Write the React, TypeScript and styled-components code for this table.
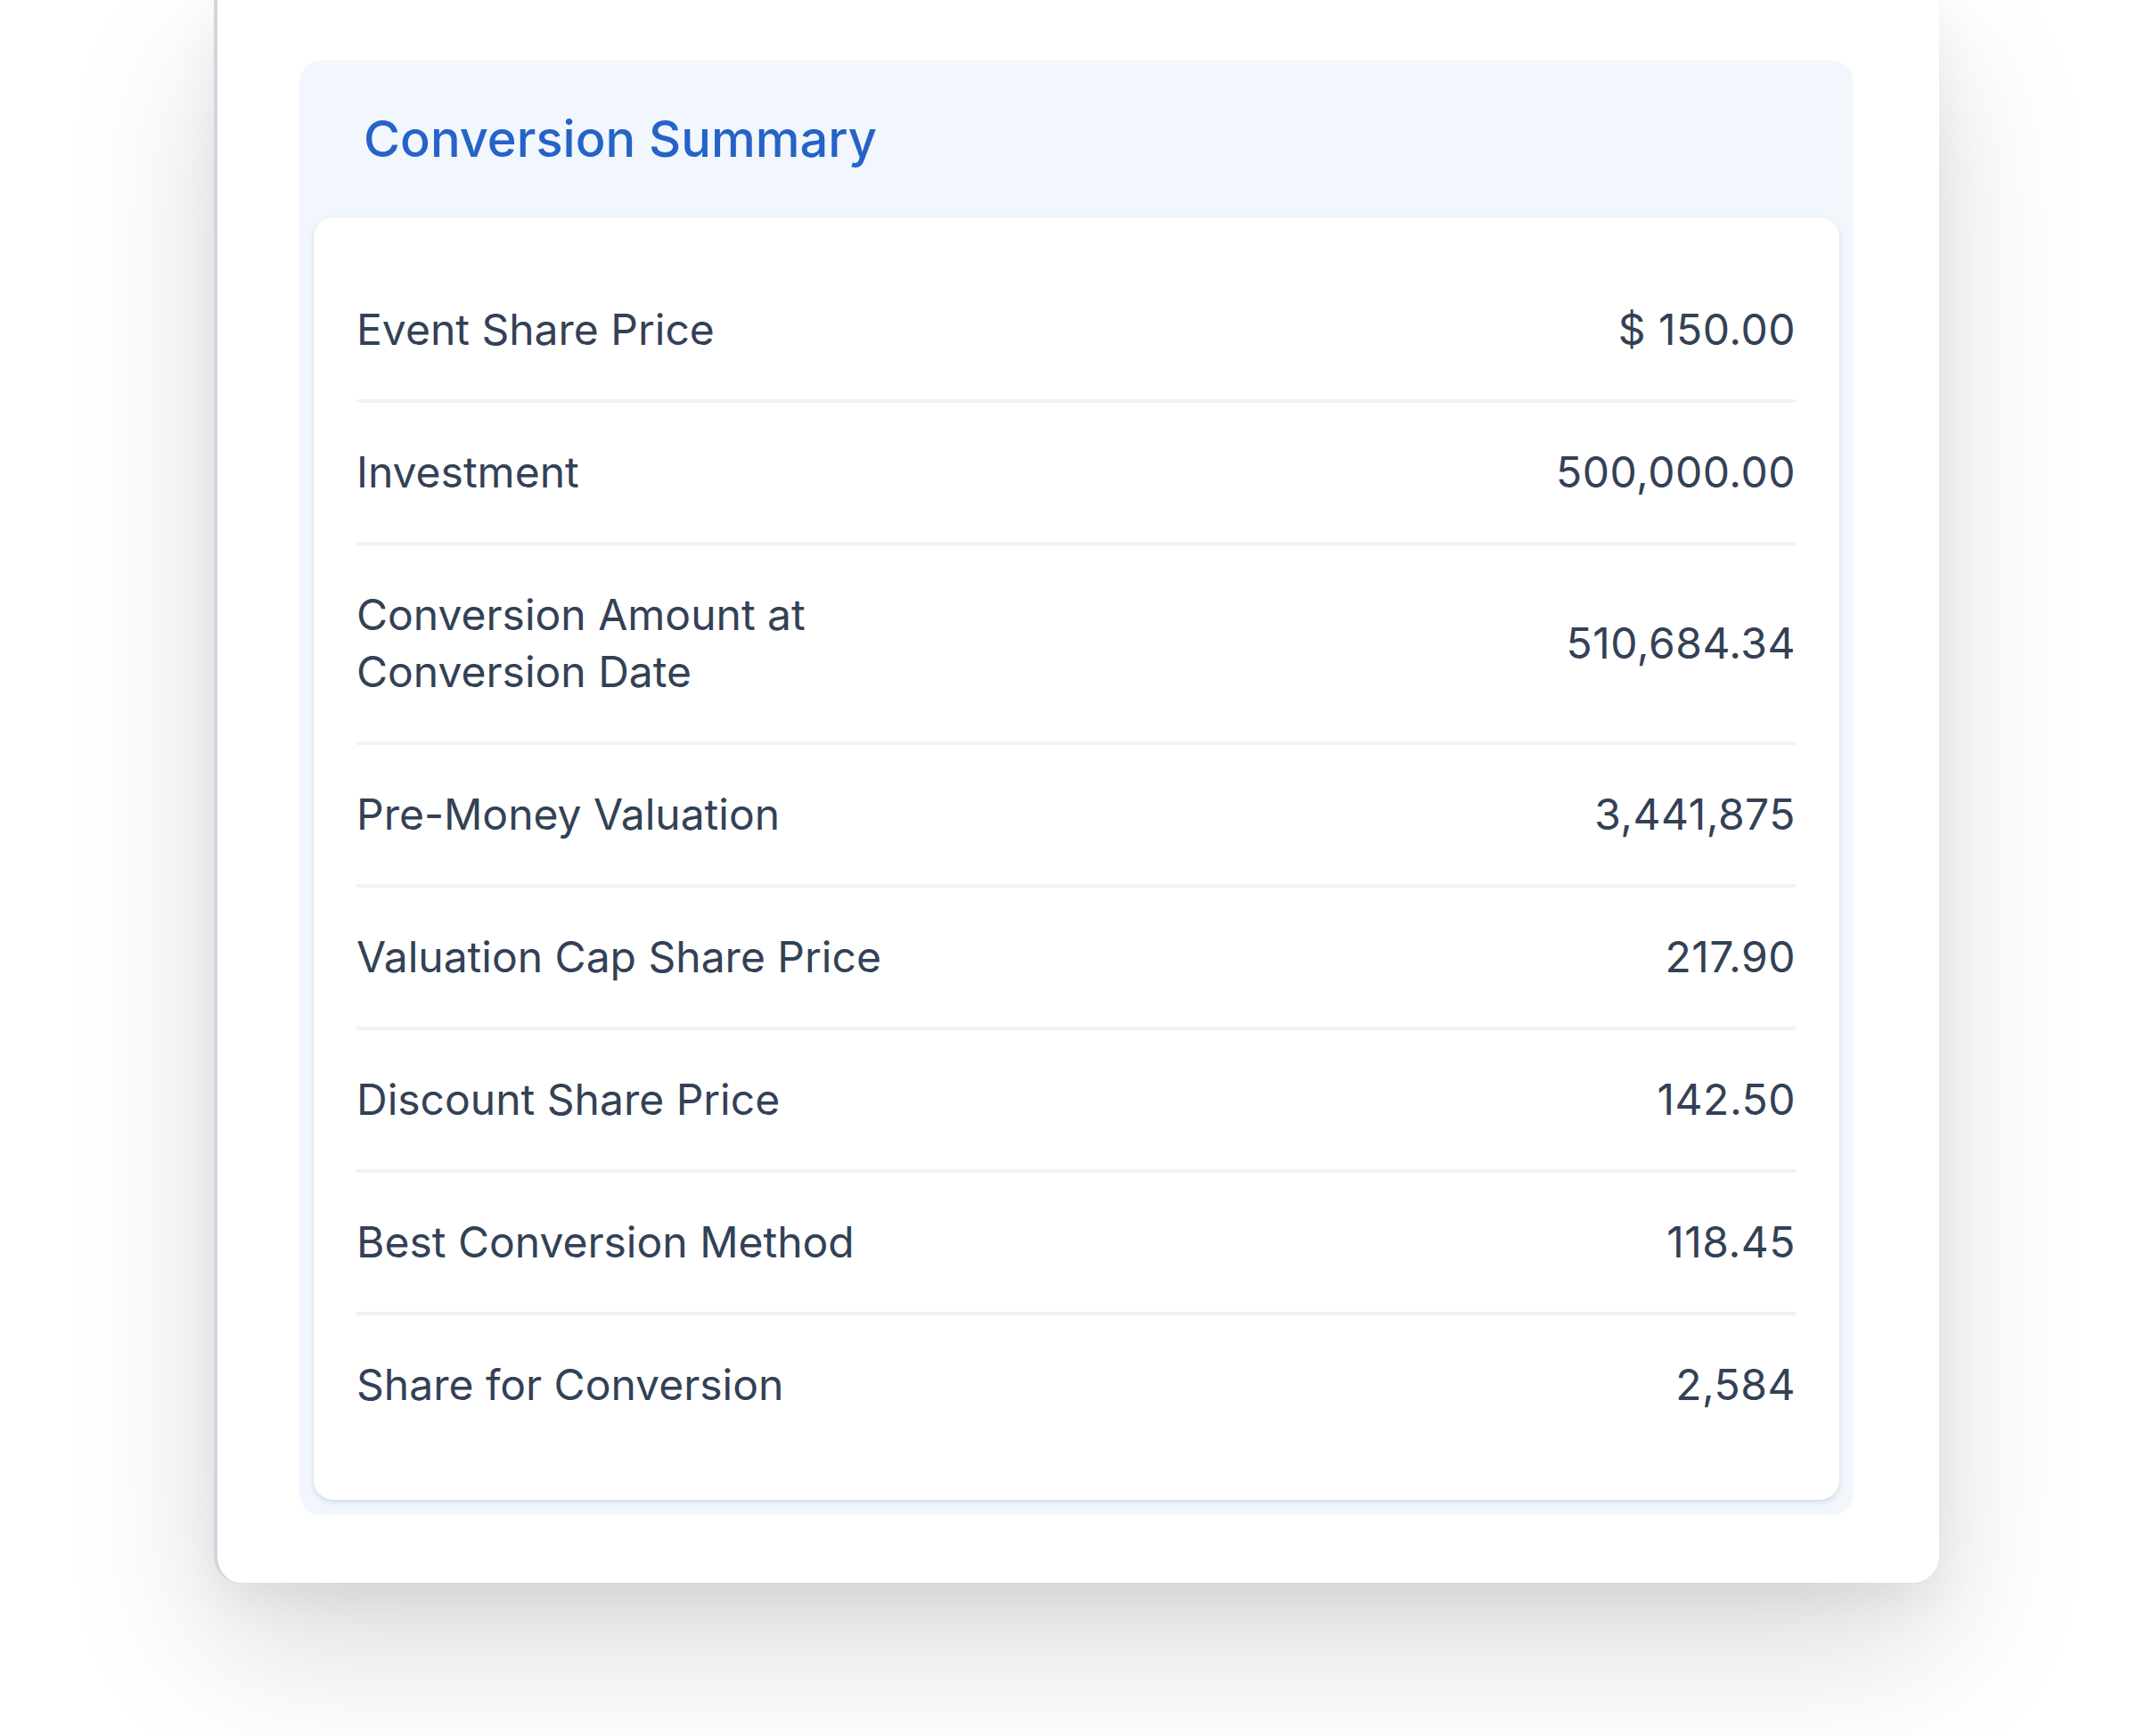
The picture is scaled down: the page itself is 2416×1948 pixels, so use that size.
import React from "react";
import styled, { createGlobalStyle } from "styled-components";

const GlobalStyle = createGlobalStyle`
  html, body {
    margin: 0;
    padding: 0;
    background: #ffffff;
  }
  body {
    font-family: Inter, "Noto Sans", "Liberation Sans", sans-serif;
    -webkit-font-smoothing: antialiased;
  }
  #root {
    min-height: 100vh;
    overflow: hidden;
  }
`;

const Page = styled.main`
  min-height: 1948px;
  display: flex;
  justify-content: center;
  align-items: flex-start;
  background: #ffffff;
`;

const Sheet = styled.section`
  box-sizing: border-box;
  width: 1936px;
  background: #ffffff;
  border-left: 4px solid #d0d5de;
  border-radius: 0 0 30px 30px;
  padding: 68px 96px 76px 92px;
  box-shadow: 0 70px 170px rgba(0, 0, 0, 0.15), 0 20px 50px rgba(0, 0, 0, 0.05);
`;

const Panel = styled.div`
  background: #f2f7fe;
  border-radius: 24px;
  padding: 0 16px 17px;
`;

const PanelHeader = styled.header`
  display: flex;
  align-items: center;
  height: 176px;
  padding-left: 56px;
`;

const Title = styled.h2`
  margin: 0;
  font-family: Inter, "Noto Sans", sans-serif;
  font-size: 56px;
  line-height: 64px;
  font-weight: 500;
  color: #2563c7;
`;

const Card = styled.div`
  background: #ffffff;
  border-radius: 22px;
  padding: 48px 49px 51px 48px;
  box-shadow: 0 3px 6px rgba(100, 116, 139, 0.2), 0 0 2px rgba(100, 116, 139, 0.08);
`;

const Row = styled.div<{ $last?: boolean }>`
  display: flex;
  justify-content: space-between;
  align-items: center;
  gap: 48px;
  padding: 46px 0;
  border-bottom: ${(p) => (p.$last ? "none" : "4px solid #f1f2f6")};
`;

const Label = styled.span`
  max-width: 640px;
  font-size: 48px;
  line-height: 64px;
  font-weight: 400;
  color: #334155;
`;

const Value = styled.span`
  font-size: 48px;
  line-height: 64px;
  font-weight: 400;
  letter-spacing: 0.5px;
  color: #334155;
  text-align: right;
  white-space: nowrap;
`;

const rows: { label: string; value: string }[] = [
  { label: "Event Share Price", value: "$ 150.00" },
  { label: "Investment", value: "500,000.00" },
  { label: "Conversion Amount at Conversion Date", value: "510,684.34" },
  { label: "Pre-Money Valuation", value: "3,441,875" },
  { label: "Valuation Cap Share Price", value: "217.90" },
  { label: "Discount Share Price", value: "142.50" },
  { label: "Best Conversion Method", value: "118.45" },
  { label: "Share for Conversion", value: "2,584" },
];

export default function App() {
  return (
    <>
      <GlobalStyle />
      <Page>
        <Sheet>
          <Panel>
            <PanelHeader>
              <Title>Conversion Summary</Title>
            </PanelHeader>
            <Card>
              {rows.map((r, i) => (
                <Row key={r.label} $last={i === rows.length - 1}>
                  <Label>{r.label}</Label>
                  <Value>{r.value}</Value>
                </Row>
              ))}
            </Card>
          </Panel>
        </Sheet>
      </Page>
    </>
  );
}
